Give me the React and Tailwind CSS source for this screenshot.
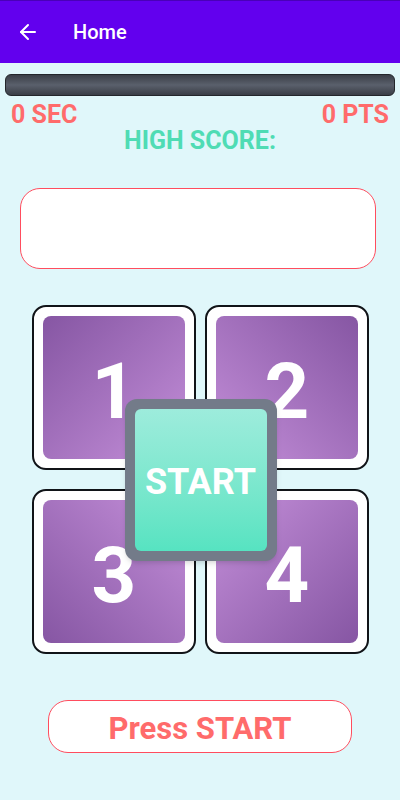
import { ArrowLeft } from "lucide-react";

const tiles = [
  { n: "1", grad: "bg-gradient-to-br" },
  { n: "2", grad: "bg-gradient-to-bl" },
  { n: "3", grad: "bg-gradient-to-tr" },
  { n: "4", grad: "bg-gradient-to-tl" },
];

function Tile({ n, grad }) {
  return (
    <div className="w-[164px] h-[165px] rounded-[14px] border-2 border-[#111418] bg-white p-[9px]">
      <div
        className={`w-full h-full rounded-[8px] ${grad} from-[#8656a3] to-[#c48fd9] flex items-center justify-center`}
      >
        <span className="text-white font-bold text-[78px] leading-none translate-y-[4px]">{n}</span>
      </div>
    </div>
  );
}

export default function App() {
  return (
    <div
      className="w-[400px] h-[800px] bg-[#e0f7fa] overflow-hidden"
      style={{ fontFamily: "Roboto, 'Liberation Sans', sans-serif" }}
    >
      <header className="h-[63px] bg-[#6200ee] border-t border-[#4a00b8] flex items-center px-[16px]">
        <ArrowLeft className="w-[24px] h-[24px] text-white" strokeWidth={2} />
        <span className="ml-[33px] text-white text-[20px] font-medium">Home</span>
      </header>

      <div className="mx-[5px] mt-[11px] h-[22px] rounded-[6px] border border-[#23262b] bg-gradient-to-b from-[#3b3f47] via-[#5a606c] to-[#3a3e46]" />

      <div className="mt-[5px] px-[11px] flex justify-between text-[25px] font-bold text-[#ff6b6b] leading-[28px]">
        <span>0 SEC</span>
        <span>0 PTS</span>
      </div>

      <div className="text-center text-[25px] font-bold text-[#4fdcb4] leading-[28px] -mt-[2px]">
        HIGH SCORE:
      </div>

      <div className="ml-[20px] mt-[33px] w-[356px] h-[81px] rounded-[20px] border border-[#ff4d5e] bg-white" />

      <div className="relative mt-[36px] ml-[32px] w-[337px] grid grid-cols-2 gap-x-[9px] gap-y-[19px]">
        {tiles.map((t) => (
          <Tile key={t.n} {...t} />
        ))}
        <div className="absolute left-1/2 top-1/2 -translate-x-1/2 -translate-y-1/2 w-[152px] h-[162px] rounded-[12px] bg-[#737b89] p-[10px] shadow-md">
          <div className="w-full h-full rounded-[6px] bg-gradient-to-b from-[#9decdc] to-[#56e3c1] flex items-center justify-center">
            <span className="text-white font-bold text-[36px] leading-none translate-y-[2px]">START</span>
          </div>
        </div>
      </div>

      <div className="mx-auto mt-[46px] w-[304px] h-[53px] rounded-[20px] border border-[#ff4d5e] bg-white flex items-center justify-center">
        <span className="text-[#ff6b6b] font-bold text-[31px] leading-none translate-y-[2px]">Press START</span>
      </div>
    </div>
  );
}
